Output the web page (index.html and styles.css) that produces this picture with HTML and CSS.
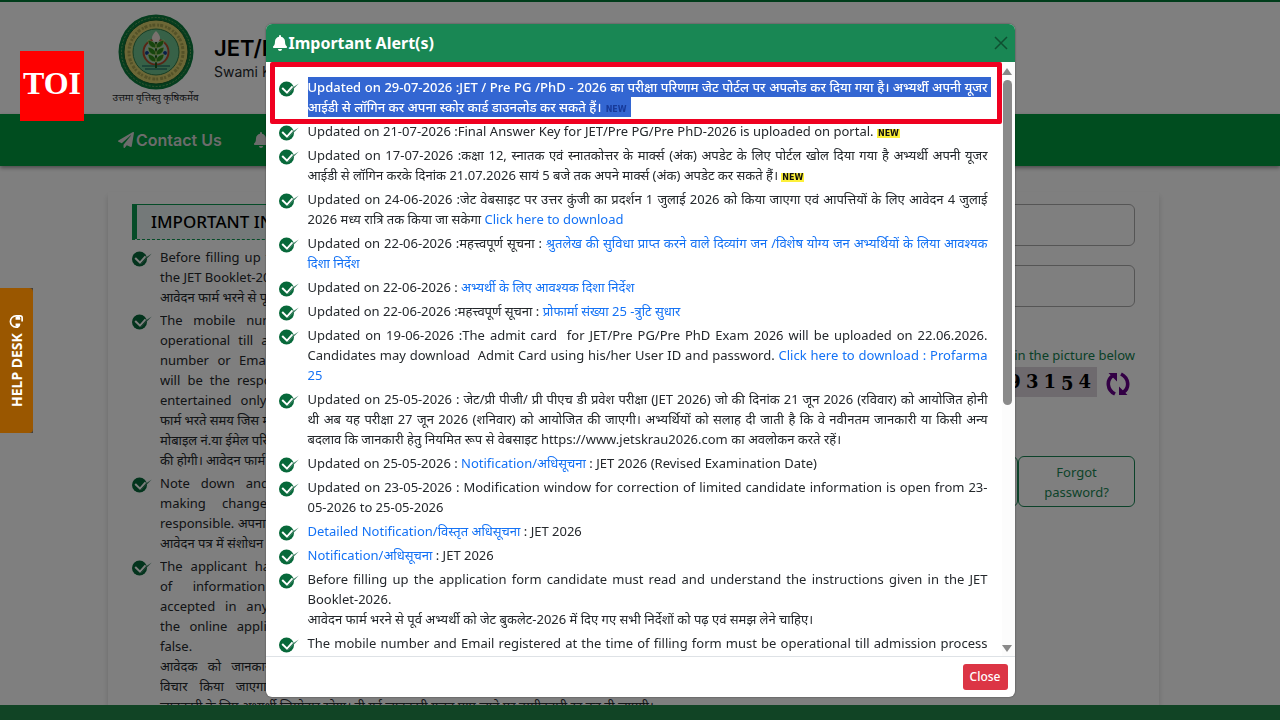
FILE: index.html
```html
<!DOCTYPE html>
<html lang="en">
<head>
<meta charset="utf-8">
<meta name="viewport" content="width=device-width, initial-scale=1">
<title>JET/Pre PG/PhD 2026</title>
<link rel="stylesheet" href="styles.css">
</head>
<body>
<svg width="0" height="0" class="defs" aria-hidden="true">
  <symbol id="tick" viewBox="0 0 20 16">
    <circle cx="7.5" cy="8" r="7.5" fill="#07693a"/>
    <path d="M3.2 7 L8 11.6 L13.5 5.4" fill="none" stroke="#fff" stroke-width="2"/>
    <path d="M9 13.6 L19.8 2.6 L14.5 6 L8.4 12.4 Z" fill="#3f8064"/>
  </symbol>
  <symbol id="bell" viewBox="0 0 448 512">
    <path fill="currentColor" d="M224 512c35 0 64-29 64-64H160c0 35 29 64 64 64zm215-149c-19-21-55-52-55-155 0-78-54-140-128-155V32a32 32 0 1 0-64 0v21C118 68 64 130 64 208c0 103-36 134-55 155-6 6-9 14-9 21 0 17 13 32 32 32h384c19 0 32-15 32-32 0-7-3-15-9-21z"/>
  </symbol>
</svg>

<div class="page">
  <header class="masthead">
    <div class="emblem">
      <svg width="76" height="76" viewBox="0 0 76 76" aria-hidden="true">
        <circle cx="38" cy="38" r="37.5" fill="#0b7a3c"/>
        <circle cx="38" cy="38" r="34.5" fill="none" stroke="#6fa860" stroke-width="1" stroke-dasharray="2 1.5"/>
        <circle cx="38" cy="38" r="32" fill="#d9cf6c" stroke="#165e2c"/>
        <circle cx="38" cy="38" r="27" fill="none" stroke="#a8a450" stroke-width="3" stroke-dasharray="2 1 3 2"/>
        <circle cx="38" cy="38" r="23" fill="#6fc38f" stroke="#2b7a4b"/>
        <circle cx="38" cy="38" r="12.5" fill="#9ccfc2" stroke="#b04b2a" stroke-width="2"/>
        <circle cx="29" cy="39" r="2" fill="#123f8c"/><circle cx="47" cy="39" r="2" fill="#123f8c"/>
        <path d="M24 52h28M27 55h22" stroke="#2c7f6b" stroke-width="1.5"/>
        <path d="M38 54V25" stroke="#1c5b1a" stroke-width="2"/>
        <g fill="#2f8a1c" stroke="#d6e08a" stroke-width=".6">
          <path d="M38 34c-5 0-8-3-8-8 5 1 8 3 8 8zM38 34c5 0 8-3 8-8-5 1-8 3-8 8z"/>
          <path d="M38 41c-5 0-8-3-8-8 5 1 8 3 8 8zM38 41c5 0 8-3 8-8-5 1-8 3-8 8z"/>
          <path d="M38 48c-5 0-8-3-8-8 5 1 8 3 8 8zM38 48c5 0 8-3 8-8-5 1-8 3-8 8z"/>
        </g>
        <path d="M38 17c3 3 4 5 4 7a4 4 0 0 1-8 0c0-2 1-4 4-7z" fill="#f2e3dc"/>
      </svg>
      <span class="motto">उत्तमा वृत्तिस्तु कृषिकर्मेव</span>
    </div>
    <div class="names">
      <h1>JET/Pre PG/PhD 2026</h1>
      <p>Swami Keshwanand Rajasthan Agricultural University</p>
    </div>
  </header>
  <nav class="bar">
    <a href="#contact"><svg width="16" height="16" viewBox="0 0 512 512" aria-hidden="true"><path fill="currentColor" d="M476 3 12 271c-18 10-16 36 2 43l107 45L408 106c5-5 13 2 8 8L176 407v80c0 24 28 33 42 16l64-78 125 53c15 6 31-3 33-19l72-432C515 8 494-7 476 3z"/></svg>Contact Us</a>
    <a href="#alerts"><svg width="14" height="16" aria-hidden="true"><use href="#bell"/></svg>Alerts</a>
  </nav>

  <main class="card">
    <section class="info">
      <h2>IMPORTANT INFORMATION</h2>
      <ul class="ticks">
        <li><svg class="tick" aria-hidden="true"><use href="#tick"/></svg><div>
          <span class="full">Before filling up the application form candidate must read and understand the instructions given in</span>
          <span class="line">the JET Booklet-2026.</span>
          <span class="line">आवेदन फार्म भरने से पूर्व अभ्यर्थी को जेट बुकलेट-2026 में दिए गए सभी निर्देशों को पढ़ लें।</span></div></li>
        <li><svg class="tick" aria-hidden="true"><use href="#tick"/></svg><div>
          <span class="full">The mobile number and Email registered at the time of filling form must be kept fully</span>
          <span class="full">operational till admission process is completely over. Any change in the registered mobile no.</span>
          <span class="full">number or Email will not be accepted at a later stage and the candidate alone at all times</span>
          <span class="full">will be the responsible for any loss of the information. No request in this regard will be to be</span>
          <span class="full">entertained only, mobile number and Email once registered will be used for all later steps.</span>
          <span class="line">फार्म भरते समय जिस मोबाइल नंबर एवं ईमेल का उपयोग किया गया है वह प्रवेश प्रक्रिया तक चालू रहे</span>
          <span class="line">मोबाइल नं.या ईमेल परिवर्तन होने की स्थिति में सूचना न मिलने की जिम्मेदारी स्वयं अभ्यर्थी</span>
          <span class="line">की होगी। आवेदन फार्म ध्यान से भरें।</span></div></li>
        <li><svg class="tick" aria-hidden="true"><use href="#tick"/></svg><div>
          <span class="full">Note down and keep safe the user name and password for future use. While you are</span>
          <span class="full">making change in the form the candidate will be held solely to be the one</span>
          <span class="line">responsible. अपना यूजर नेम एवं पासवर्ड सुरक्षित रखें जिससे भविष्य में इसका उपयोग हो सके</span>
          <span class="line">आवेदन पत्र में संशोधन की जिम्मेदारी अभ्यर्थी की होगी।</span></div></li>
        <li><svg class="tick" aria-hidden="true"><use href="#tick"/></svg><div>
          <span class="full">The applicant has to fill the information carefully in the application form as any later change</span>
          <span class="full">of information provided by the applicant in the online form will not be</span>
          <span class="full">accepted in any case. Applicant is responsible for all of the details that are given in the</span>
          <span class="full">the online application form if any of the information so given is found to be incorrect or</span>
          <span class="line">false.</span>
          <span class="full">आवेदक को जानकारी सावधानी से भरनी चाहिए, बाद में किसी भी प्रकार के परिवर्तन पर किसी भी दशा में नहीं</span>
          <span class="full">विचार किया जाएगा। आवेदन पत्र में भरी गई समस्त सूचना तथा संलग्न दस्तावेजों की सही एवं पूर्ण रूप से</span>
          <span class="line">जानकारी के लिए अभ्यर्थी जिम्मेदार रहेगा। दी गई जानकारी गलत पाए जाने पर उम्मीदवारी रद्द कर दी जाएगी।</span></div></li>
      </ul>
    </section>
    <form class="login">
      <input type="text" aria-label="User ID">
      <input type="password" aria-label="Password">
      <p class="hint">Enter the code shown in the picture below</p>
      <div class="captcha">
        <span class="code"><i>8</i><i>9</i><i>3</i><i>1</i><i class="low">5</i><i>4</i></span>
        <button type="button" class="refresh" aria-label="Refresh code"><svg width="24" height="24" viewBox="0 0 24 24"><g fill="none" stroke="#66008a" stroke-width="3.6"><path d="M9 22 C1 18 0 8 7 3.5"/><path d="M15 2 C23 6 24 16 17 20.5"/></g><path d="M2.5 1H11V9.5zM21.5 23H13V14.5z" fill="#66008a"/></svg></button>
      </div>
      <div class="actions"><button type="button">Sign in</button><button type="button">Forgot password?</button></div>
    </form>
  </main>
  <footer class="foot"></footer>
</div>

<div class="backdrop">
  <div class="modal" role="dialog" aria-labelledby="alert-title">
    <div class="modal-head">
      <h2 id="alert-title"><svg width="14" height="16" aria-hidden="true"><use href="#bell"/></svg>Important Alert(s)</h2>
      <button type="button" class="x" aria-label="Close dialog"><svg width="14" height="14" viewBox="0 0 14 14"><path d="M1 1 13 13M13 1 1 13" stroke="#0f4f31" stroke-width="1.5"/></svg></button>
    </div>
    <div class="modal-body">
      <ul class="ticks alerts">
        <li><svg class="tick" aria-hidden="true"><use href="#tick"/></svg><p><strong class="picked">Updated on 29-07-2026 :JET / Pre PG /PhD - 2026 का परीक्षा परिणाम जेट पोर्टल पर अपलोड कर दिया गया है। अभ्यर्थी अपनी यूजर आईडी से लॉगिन कर अपना स्कोर कार्ड डाउनलोड कर सकते हैं। <span class="new">NEW</span></strong></p></li>
        <li><svg class="tick" aria-hidden="true"><use href="#tick"/></svg><p>Updated on 21-07-2026 :Final Answer Key for JET/Pre PG/Pre PhD-2026 is uploaded on portal. <span class="new">NEW</span></p></li>
        <li><svg class="tick" aria-hidden="true"><use href="#tick"/></svg><p>Updated on 17-07-2026 :कक्षा 12, स्नातक एवं स्नातकोत्तर के मार्क्स (अंक) अपडेट के लिए पोर्टल खोल दिया गया है अभ्यर्थी अपनी यूजर आईडी से लॉगिन करके दिनांक 21.07.2026 सायं 5 बजे तक अपने मार्क्स (अंक) अपडेट कर सकते हैं। <span class="new">NEW</span></p></li>
        <li><svg class="tick" aria-hidden="true"><use href="#tick"/></svg><p>Updated on 24-06-2026 :जेट वेबसाइट पर उत्तर कुंजी का प्रदर्शन 1 जुलाई 2026 को किया जाएगा एवं आपत्तियों के लिए आवेदन 4 जुलाई 2026 मध्य रात्रि तक किया जा सकेगा <a href="#a">Click here to download</a></p></li>
        <li><svg class="tick" aria-hidden="true"><use href="#tick"/></svg><p>Updated on 22-06-2026 :महत्त्वपूर्ण सूचना : <a href="#b">श्रुतलेख की सुविधा प्राप्त करने वाले दिव्यांग जन /विशेष योग्य जन अभ्यर्थियों के लिया आवश्यक दिशा निर्देश</a></p></li>
        <li><svg class="tick" aria-hidden="true"><use href="#tick"/></svg><p>Updated on 22-06-2026 : <a href="#c">अभ्यर्थी के लिए आवश्यक दिशा निर्देश</a></p></li>
        <li><svg class="tick" aria-hidden="true"><use href="#tick"/></svg><p>Updated on 22-06-2026 :महत्त्वपूर्ण सूचना : <a href="#d">प्रोफार्मा संख्या 25 -त्रुटि सुधार</a></p></li>
        <li><svg class="tick" aria-hidden="true"><use href="#tick"/></svg><p>Updated on 19-06-2026 :The admit card&nbsp; for JET/Pre PG/Pre PhD Exam 2026 will be uploaded on 22.06.2026. Candidates may download&nbsp; Admit Card using his/her User ID and password. <a href="#e">Click here to download : Profarma 25</a></p></li>
        <li><svg class="tick" aria-hidden="true"><use href="#tick"/></svg><p>Updated on 25-05-2026 : जेट/प्री पीजी/ प्री पीएच डी प्रवेश परीक्षा (JET 2026) जो की दिनांक 21 जून 2026 (रविवार) को आयोजित होनी थी अब यह परीक्षा 27 जून 2026 (शनिवार) को आयोजित की जाएगी। अभ्यर्थियों को सलाह दी जाती है कि वे नवीनतम जानकारी या किसी अन्य बदलाव कि जानकारी हेतु नियमित रूप से वेबसाइट https://www.jetskrau2026.com का अवलोकन करते रहें।</p></li>
        <li><svg class="tick" aria-hidden="true"><use href="#tick"/></svg><p>Updated on 25-05-2026 : <a href="#f">Notification/अधिसूचना</a> : JET 2026 (Revised Examination Date)</p></li>
        <li><svg class="tick" aria-hidden="true"><use href="#tick"/></svg><p>Updated on 23-05-2026 : Modification window for correction of limited candidate information is open from 23-05-2026 to 25-05-2026</p></li>
        <li><svg class="tick" aria-hidden="true"><use href="#tick"/></svg><p><a href="#g">Detailed Notification/विस्तृत अधिसूचना</a> : JET 2026</p></li>
        <li><svg class="tick" aria-hidden="true"><use href="#tick"/></svg><p><a href="#h">Notification/अधिसूचना</a> : JET 2026</p></li>
        <li><svg class="tick" aria-hidden="true"><use href="#tick"/></svg><p>Before filling up the application form candidate must read and understand the instructions given in the JET Booklet-2026.<br>आवेदन फार्म भरने से पूर्व अभ्यर्थी को जेट बुकलेट-2026 में दिए गए सभी निर्देशों को पढ़ एवं समझ लेने चाहिए।</p></li>
        <li class="spread"><svg class="tick" aria-hidden="true"><use href="#tick"/></svg><p>The mobile number and Email registered at the time of filling form must be operational till admission process</p></li>
      </ul>
      <div class="scroll" aria-hidden="true"><span class="up"></span><span class="track"><span class="thumb"></span></span><span class="down"></span></div>
      <div class="marker"></div>
    </div>
    <div class="modal-foot"><button type="button">Close</button></div>
  </div>
</div>

<button type="button" class="help"><span>HELP DESK</span><svg width="15" height="15" viewBox="0 0 16 16" aria-hidden="true"><g fill="none" stroke="#fff" stroke-width="1.8"><path d="M2 10V7.5a6 6 0 0 1 12 0V12q0 2-2 2H8"/></g><path d="M3.5 7H6v5H4.5Q2 12 2 9.5zM12.5 7H10v5h1.5Q14 12 14 9.5z" fill="#fff"/></svg></button>
<div class="brand">TOI</div>
</body>
</html>
```
FILE: styles.css
```css
* { box-sizing: border-box; }
html, body { height: 100%; }
body {
  margin: 0;
  overflow: hidden;
  background: #fff;
  color: #24282c;
  font: 13px/20px "Noto Sans", "Noto Sans Devanagari", sans-serif;
}
h1, h2, p, ul { margin: 0; padding: 0; }
button, input { font: inherit; }
button { cursor: pointer; }
a { color: #1472f5; text-decoration: none; }
.defs { position: absolute; }

.page { height: 100vh; display: flex; flex-direction: column; border-top: 2px solid #007a36; }
.masthead { flex: none; height: 112px; padding: 12px 113px 0; display: flex; gap: 16px; }
.emblem { width: 85px; display: flex; flex-direction: column; align-items: center; }
.motto { font-size: 10px; line-height: 14px; white-space: nowrap; }
.names { padding-top: 20px; font-family: Inter, sans-serif; }
.names h1 { font-size: 22px; line-height: 28px; font-weight: 600; color: #000; }
.names p { font-size: 14px; line-height: 20px; }
.bar {
  flex: none; height: 52px; padding: 0 118px; display: flex; align-items: center; gap: 32px;
  background: #009a3e; box-shadow: 0 2px 4px rgba(0, 0, 0, .4);
}
.bar a { display: flex; align-items: center; gap: 2px; color: #d8d8d8; font: 600 16px/24px Inter, sans-serif; }

.card {
  flex: 1; min-height: 0; overflow: hidden; margin: 26px 121px 0 108px; padding: 12px 24px 0;
  display: flex; gap: 40px; box-shadow: 0 4px 6px rgba(0, 0, 0, .16);
}
.info { flex: 1; min-width: 0; }
.info h2 {
  padding: 3px 14px; border-left: 5px solid #0a9850; border-top: 1px solid #0a9850; border-bottom: 1px dashed #0a9850;
  background: #e9f3f3; color: #000; font-size: 17px; line-height: 28px; font-weight: 500;
}
.ticks { list-style: none; display: flex; flex-direction: column; }
.ticks li { display: flex; gap: 8px; text-align: justify; }
.ticks li > :last-child { flex: 1; min-width: 0; }
.tick { flex: none; width: 20px; height: 16px; margin-top: 4px; }
.info .ticks { padding-top: 7px; gap: 3px; }
.full, .line { display: block; white-space: nowrap; }
.full { text-align-last: justify; white-space: normal; height: 20px; overflow: hidden; }

.login { width: 306px; display: flex; flex-direction: column; }
.login input { width: 100%; height: 42px; margin-bottom: 19px; border: 1px solid #aaa; border-radius: 6px; background: #fff; }
.hint { padding-top: 19px; text-align: right; color: #12814f; white-space: nowrap; }
.captcha { display: flex; justify-content: flex-end; margin-top: 2px; gap: 4px; }
.code { height: 30px; padding: 0 6px; display: flex; gap: 5px; background: #ddd5dd; color: #000; font: bold 18px/30px "DejaVu Serif", serif; }
.code i { font-style: normal; }
.code .low { padding-top: 2px; }
.refresh { width: 34px; height: 34px; padding: 0; border: 0; background: none; display: grid; place-items: center; }
.actions { display: flex; margin-top: 55px; }
.actions button { flex: 1; min-height: 51px; padding: 4px 20px; border: 1px solid #198754; border-radius: 6px; background: none; color: #198754; }
.actions button:first-child { flex: 0 0 189px; }
.foot { flex: none; height: 15px; background: #22884a; position: relative; }

.backdrop { position: fixed; inset: 0; padding: 24px 24px 23px; background: rgba(0, 0, 0, .5); display: flex; justify-content: center; }
.modal { width: 100%; max-width: 749px; display: flex; flex-direction: column; border-radius: 6px; background: #fff; box-shadow: 0 0 2px rgba(0, 0, 0, .5); }
.modal-head {
  flex: none; height: 38px; padding: 0 7px; display: flex; align-items: center; justify-content: space-between;
  border-radius: 6px 6px 0 0; background: #198754; color: #fff;
}
.modal-head h2 { display: flex; align-items: center; gap: 2px; font-size: 16px; line-height: 24px; font-weight: 700; }
.x { display: flex; padding: 0; border: 0; background: none; }
.modal-body { position: relative; flex: 1; min-height: 0; display: flex; overflow: hidden; }
.alerts { flex: 1; min-width: 0; padding: 15px 14px 0 13px; gap: 4px; overflow: hidden; }
.alerts li { gap: 9px; }
.spread { text-align-last: justify; }
.picked { padding: 1px 3px 1px 0; margin-right: -3px; background: #3366d2; color: #fff; font-weight: 500; -webkit-box-decoration-break: clone; box-decoration-break: clone; }
.new { padding: 0 1px; background: #fdf03a; color: #111; font: bold 8px/8px "DejaVu Sans", sans-serif; }
.picked .new { background: none; color: #173a9a; }
.scroll { width: 13px; display: flex; flex-direction: column; align-items: center; padding: 6px 2px 4px 0; background: #fcfcfc; }
.up, .down { border: 5px solid transparent; }
.up { border-top: 0; border-bottom: 7px solid #8a8a8a; }
.down { border-bottom: 0; border-top: 7px solid #8a8a8a; }
.track { flex: 1; width: 9px; padding: 5px 0; }
.thumb { display: block; height: 58%; border-radius: 5px; background: #8a8a8a; }
.marker { position: absolute; top: 0; left: 4px; right: 13px; height: 62px; border: 5px solid #ef0020; border-radius: 2px; }
.modal-foot { flex: none; height: 41px; padding: 7px; display: flex; justify-content: flex-end; border-top: 1px solid #dee2e6; }
.modal-foot button { height: 26px; padding: 0 7px; border: 0; border-radius: 3px; background: #dc3545; color: #fff; font-size: 12px; font-weight: 500; }

.help {
  position: fixed; left: 0; top: 288px; width: 33px; height: 145px; padding: 0; border: 0; border-radius: 4px 0 0 4px;
  display: flex; align-items: center; justify-content: center; gap: 5px;
  writing-mode: vertical-rl; transform: rotate(180deg); background: #9a5700; color: #fff; font-size: 14px; font-weight: 700;
}
.help svg { transform: rotate(90deg); }
.brand { position: fixed; left: 20px; top: 51px; width: 64px; height: 70px; background: #f00; color: #fff; text-align: center; font: bold 32px/64px "Liberation Serif", serif; }
```
